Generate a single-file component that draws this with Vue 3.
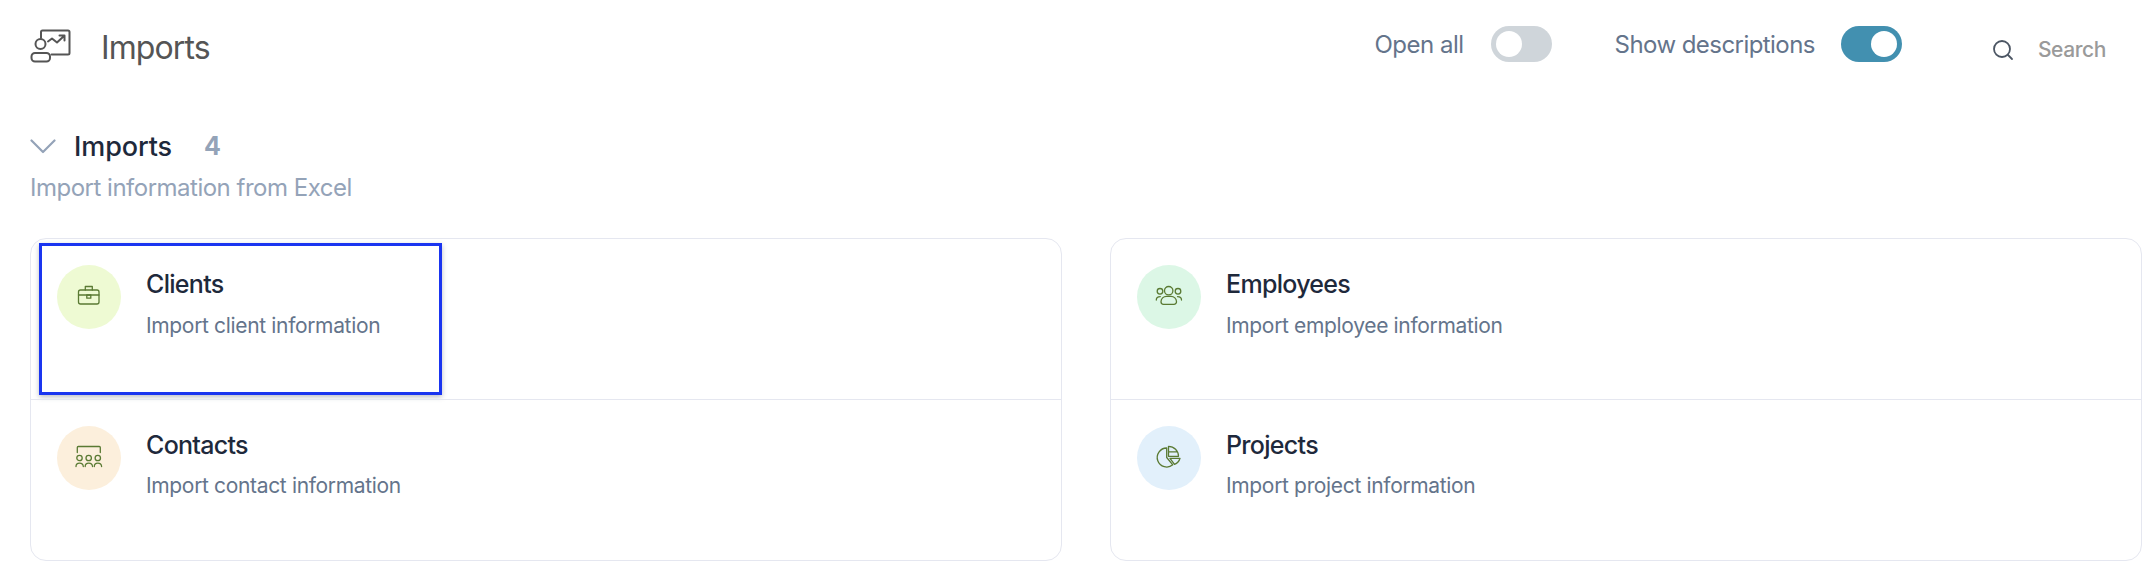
<script setup>
const rows = [
  [
    { name: 'Clients', desc: 'Import client information', bg: '#eefad3', icon: 'case', marked: true },
    { name: 'Contacts', desc: 'Import contact information', bg: '#fcefdc', icon: 'room' },
  ],
  [
    { name: 'Employees', desc: 'Import employee information', bg: '#dcf7e6', icon: 'team' },
    { name: 'Projects', desc: 'Import project information', bg: '#e2f0fb', icon: 'pie' },
  ],
]
</script>

<template>
  <div class="page">
    <header class="top">
      <div class="brand">
        <svg class="brand-icon" width="42" height="34" viewBox="0 0 42 34" fill="none" stroke="#555" stroke-width="2" stroke-linecap="round" stroke-linejoin="round">
          <path d="M11 9V3a1.5 1.5 0 0 1 1.500-1.500H38a1.500 1.500 0 0 1 1.500 1.500v21a1.500 1.500 0 0 1-1.500 1.500H21.500" />
          <circle cx="10.500" cy="15" r="5" />
          <rect x="1.500" y="24" width="18.500" height="8.500" rx="3.500" />
          <path d="M18 12.500l4-3 5 4 7-6.500M29.500 6.500H34.500V11.500" />
        </svg>
        <span class="brand-name">Imports</span>
      </div>
      <div class="tools">
        <div class="toggle-group first">
          <span class="toggle-label">Open all</span>
          <span class="switch"><span class="thumb"></span></span>
        </div>
        <div class="toggle-group second">
          <span class="toggle-label narrow">Show descriptions</span>
          <span class="switch on"><span class="thumb"></span></span>
        </div>
        <div class="search">
          <svg width="22" height="22" viewBox="0 0 22 22" fill="none" stroke="#4b5563" stroke-width="1.800" stroke-linecap="round">
            <circle cx="10" cy="10" r="8" />
            <path d="M16 16l4 4" />
          </svg>
          <span class="search-text">Search</span>
        </div>
      </div>
    </header>

    <section class="section">
      <div class="section-head">
        <svg width="26" height="15" viewBox="0 0 26 15" fill="none" stroke="#94a3b8" stroke-width="2.200" stroke-linecap="round" stroke-linejoin="round">
          <path d="M1.500 1.500L13 13 24.500 1.500" />
        </svg>
        <h2 class="section-title">Imports</h2>
        <span class="count">4</span>
      </div>
      <p class="section-sub">Import information from Excel</p>

      <div class="grid">
        <div v-for="(col, i) in rows" :key="i" class="card">
          <div v-for="item in col" :key="item.name" class="row">
            <span class="circle" :style="{ background: item.bg }">
              <svg width="32" height="32" viewBox="0 0 32 32" fill="none" stroke="#5a7a33" stroke-width="1.300" stroke-linecap="round" stroke-linejoin="round">
                <template v-if="item.icon === 'case'">
                  <rect x="5.500" y="9" width="20.500" height="14" rx="2" />
                  <path d="M12.300 9V5.500h7V9M5.500 14h20.500" />
                  <rect x="13.800" y="14" width="4" height="3.200" />
                </template>
                <template v-else-if="item.icon === 'room'">
                  <path d="M4.300 10.500V5.500a1 1 0 0 1 1-1h21a1 1 0 0 1 1 1v5" />
                  <circle cx="6.500" cy="16" r="2.700" />
                  <circle cx="15.700" cy="16" r="2.700" />
                  <circle cx="24.800" cy="16" r="2.700" />
                  <path d="M3 24.500c0-4.500 7-4.500 7.300 0M12.200 24.500c0-4.500 7-4.500 7.300 0M21.300 24.500c0-4.500 7-4.500 7.300 0" />
                </template>
                <template v-else-if="item.icon === 'team'">
                  <circle cx="15.700" cy="9.700" r="4.200" />
                  <circle cx="7" cy="10.300" r="2.800" />
                  <circle cx="25" cy="10.300" r="2.800" />
                  <path d="M10.500 23.300h10.500a2.500 2.500 0 0 0 2.500-2.500a5.500 5.500 0 0 0-5.500-5.500h-4.500a5.500 5.500 0 0 0-5.500 5.500a2.500 2.500 0 0 0 2.500 2.500z" />
                  <path d="M3.300 19c0-2 1.500-3.400 4-3.400M28.500 19c0-2-1.500-3.400-4-3.400" />
                </template>
                <template v-else>
                  <path d="M13.700 6A9.500 9.500 0 1 0 19.800 22.800L13.700 15.500Z" />
                  <path d="M15.500 4.300v10h10A10 10 0 0 0 15.500 4.300zM15.500 9.800h8.800" />
                  <path d="M17 16.300h10a9 9 0 0 1-5.500 6z" />
                </template>
              </svg>
            </span>
            <div class="text">
              <div class="name">{{ item.name }}</div>
              <div class="desc">{{ item.desc }}</div>
            </div>
            <span v-if="item.marked" class="marker"></span>
          </div>
        </div>
      </div>
    </section>
  </div>
</template>

<style>
html, body { margin: 0; background: #fff; }
</style>

<style scoped>
.page {
  width: 2150px;
  height: 564px;
  box-sizing: border-box;
  padding: 0 8px 0 30px;
  overflow: hidden;
  font-family: Inter, "Liberation Sans", sans-serif;
}
.top {
  height: 96px;
  display: flex;
  align-items: flex-start;
  justify-content: space-between;
}
.brand {
  display: flex;
  align-items: center;
  height: 94px;
}
.brand-icon { margin-right: 29px; margin-top: -3px; }
.brand-name {
  font-size: 32px;
  color: #555;
  letter-spacing: -0.9px;
}
.tools {
  display: flex;
  align-items: flex-start;
  padding-right: 36px;
}
.toggle-group {
  display: flex;
  align-items: center;
  height: 36px;
  margin-top: 26px;
}
.second { margin-left: 63px; }
.toggle-label {
  font-size: 24px;
  color: #64748b;
  letter-spacing: -0.5px;
  margin-right: 27px;
}
.toggle-label.narrow {
  letter-spacing: -0.56px;
  margin-right: 26px;
}
.switch {
  width: 61px;
  height: 36px;
  border-radius: 18px;
  background: #cfd5da;
  display: flex;
  align-items: center;
  padding: 0 5px;
  box-sizing: border-box;
}
.switch.on {
  background: #4290b0;
  justify-content: flex-end;
}
.thumb {
  width: 26px;
  height: 26px;
  border-radius: 50%;
  background: #fff;
}
.search {
  display: flex;
  align-items: center;
  margin: 37px 0 0 90px;
}
.search-text {
  font-size: 21px;
  font-weight: 500;
  color: #9a9a9a;
  margin-left: 24px;
  letter-spacing: -0.4px;
}
.section-head {
  display: flex;
  align-items: center;
  height: 40px;
  margin-top: 30px;
}
.section-title {
  margin: 0 0 0 18px;
  font-size: 27px;
  font-weight: 500;
  color: #1e293b;
  letter-spacing: -0.1px;
}
.count {
  font-size: 25px;
  font-weight: 700;
  color: #94a3b8;
  margin-left: 32px;
}
.section-sub {
  margin: 7px 0 0;
  font-size: 24px;
  line-height: 30px;
  color: #94a3b8;
  letter-spacing: -0.5px;
}
.grid {
  display: grid;
  grid-template-columns: 1fr 1fr;
  gap: 48px;
  margin-top: 35px;
}
.card {
  border: 1px solid #e5e7f0;
  border-radius: 16px;
  background: #fff;
}
.row {
  position: relative;
  height: 160px;
  box-sizing: border-box;
  padding: 26px 0 0 26px;
  display: flex;
  align-items: flex-start;
}
.row + .row { border-top: 1px solid #e5e7f0; height: 161px; padding-top: 26px; }
.row + .row .desc { margin-top: 11px; }
.circle {
  width: 64px;
  height: 64px;
  border-radius: 50%;
  display: flex;
  align-items: center;
  justify-content: center;
  flex: none;
}
.text { margin-left: 25px; padding-top: 4px; }
.name {
  font-size: 25px;
  line-height: 30px;
  font-weight: 500;
  color: #1e293b;
  letter-spacing: -0.7px;
}
.desc {
  margin-top: 12px;
  font-size: 21px;
  line-height: 30px;
  color: #64748b;
  letter-spacing: -0.34px;
}
.marker {
  position: absolute;
  left: 8px;
  top: 4px;
  width: 403px;
  height: 152px;
  box-sizing: border-box;
  border: 3px solid #1a35f0;
  box-shadow: 0 2px 5px rgba(60, 70, 90, 0.35);
}
</style>
